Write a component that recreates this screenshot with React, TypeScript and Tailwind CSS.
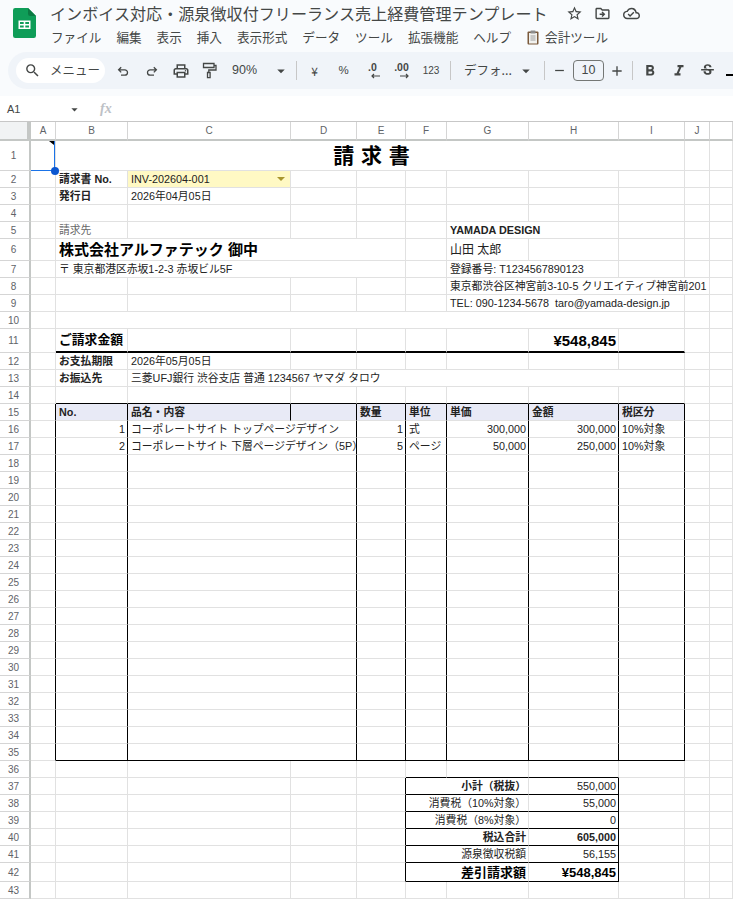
import type { ReactNode } from "react";
import {
    MdArrowDropDown,
    MdFormatBold,
    MdFormatItalic,
    MdOutlineCloudDone,
    MdOutlineDriveFileMove,
    MdOutlineLocalPrintshop,
    MdAdd,
    MdRemove,
    MdSearch,
    MdStarBorder,
    MdStrikethroughS,
} from "react-icons/md";

const GRID_COLS = "grid grid-cols-[31px_25px_72px_163px_66px_49px_41px_82px_90px_66px_25px_23px]";
const SHEET_FONT = "font-['Liberation_Sans','Noto_Sans_CJK_JP',sans-serif]";
const UI_FONT = "font-['Noto_Sans_CJK_JP','Liberation_Sans',sans-serif]";

const SPAN: Record<number, string> = {
    1: "col-span-1",
    2: "col-span-2",
    3: "col-span-3",
    4: "col-span-4",
    7: "col-span-7",
    8: "col-span-8",
};

const COL_LABELS = ["A", "B", "C", "D", "E", "F", "G", "H", "I", "J", ""];

// 行の高さ（1始まり）
function rowHeight(row: number) {
    if (row === 1) return "h-[30px]";
    if (row === 6) return "h-[22px]";
    if (row === 11) return "h-[24px]";
    if (row === 42) return "h-[19px]";
    return "h-[17px]";
}

interface CellDef {
    col: number; // 0 = A
    span?: number;
    text?: ReactNode;
    cls?: string;
}

const B = "font-bold";
const R = "justify-end pr-[2px]";
const HEAD = "bg-[#e8eaf6]";

const CELLS: Record<number, CellDef[]> = {
    1: [{ col: 1, span: 8, text: "請 求 書", cls: "justify-center text-[21px] font-bold text-black [word-spacing:1px]" }],
    2: [
        { col: 1, text: "請求書 No.", cls: B },
        {
            col: 2,
            text: (
                <>
                    <span>INV-202604-001</span>
                    <span className="ml-auto mr-[5px] h-0 w-0 border-x-[4px] border-t-[4px] border-x-transparent border-t-[#a8962e]" />
                </>
            ),
            cls: "bg-[#fff9c4]",
        },
    ],
    3: [
        { col: 1, text: "発行日", cls: B },
        { col: 2, text: "2026年04月05日" },
    ],
    5: [
        { col: 1, text: "請求先", cls: "text-[#666666]" },
        { col: 6, span: 2, text: "YAMADA DESIGN", cls: B },
    ],
    6: [
        { col: 1, span: 4, text: "株式会社アルファテック 御中", cls: "text-[15px] font-bold text-black" },
        { col: 6, text: "山田 太郎", cls: "text-[12px]" },
    ],
    7: [
        { col: 1, span: 4, text: "〒 東京都港区赤坂1-2-3 赤坂ビル5F" },
        { col: 6, span: 2, text: "登録番号: T1234567890123" },
    ],
    8: [{ col: 6, span: 4, text: "東京都渋谷区神宮前3-10-5 クリエイティブ神宮前201" }],
    9: [{ col: 6, span: 3, text: "TEL: 090-1234-5678  taro@yamada-design.jp" }],
    10: [{ col: 1, span: 8 }],
    11: [
        { col: 1, text: "ご請求金額", cls: "text-[12.800px] font-bold text-black" },
        { col: 7, text: "¥548,845", cls: `${R} text-[15px] font-bold text-black` },
    ],
    12: [
        { col: 1, text: "お支払期限", cls: B },
        { col: 2, text: "2026年05月05日" },
    ],
    13: [
        { col: 1, text: "お振込先", cls: B },
        { col: 2, span: 7, text: "三菱UFJ銀行 渋谷支店 普通 1234567 ヤマダ タロウ" },
    ],
    15: [
        { col: 1, text: "No.", cls: `${B} ${HEAD}` },
        { col: 2, text: "品名・内容", cls: `${B} ${HEAD}` },
        { col: 3, cls: HEAD },
        { col: 4, text: "数量", cls: `${B} ${HEAD}` },
        { col: 5, text: "単位", cls: `${B} ${HEAD}` },
        { col: 6, text: "単価", cls: `${B} ${HEAD}` },
        { col: 7, text: "金額", cls: `${B} ${HEAD}` },
        { col: 8, text: "税区分", cls: `${B} ${HEAD}` },
    ],
    16: [
        { col: 1, text: "1", cls: R },
        { col: 2, span: 2, text: "コーポレートサイト トップページデザイン" },
        { col: 4, text: "1", cls: R },
        { col: 5, text: "式" },
        { col: 6, text: "300,000", cls: R },
        { col: 7, text: "300,000", cls: R },
        { col: 8, text: "10%対象" },
    ],
    17: [
        { col: 1, text: "2", cls: R },
        { col: 2, span: 2, text: "コーポレートサイト 下層ページデザイン（5P）" },
        { col: 4, text: "5", cls: R },
        { col: 5, text: "ページ" },
        { col: 6, text: "50,000", cls: R },
        { col: 7, text: "250,000", cls: R },
        { col: 8, text: "10%対象" },
    ],
    37: [
        { col: 5, span: 2, text: "小計（税抜）", cls: `${R} ${B}` },
        { col: 7, text: "550,000", cls: R },
    ],
    38: [
        { col: 5, span: 2, text: "消費税（10%対象）", cls: R },
        { col: 7, text: "55,000", cls: R },
    ],
    39: [
        { col: 5, span: 2, text: "消費税（8%対象）", cls: R },
        { col: 7, text: "0", cls: R },
    ],
    40: [
        { col: 5, span: 2, text: "税込合計", cls: `${R} ${B}` },
        { col: 7, text: "605,000", cls: `${R} ${B}` },
    ],
    41: [
        { col: 5, span: 2, text: "源泉徴収税額", cls: R },
        { col: 7, text: "56,155", cls: R },
    ],
    42: [
        { col: 5, span: 2, text: "差引請求額", cls: `${R} text-[13px] font-bold text-black` },
        { col: 7, text: "¥548,845", cls: `${R} text-[13px] font-bold text-black` },
    ],
};

// 18〜35行目は明細の空行（C:D 結合）
for (let r = 18; r <= 35; r++) {
    CELLS[r] = [{ col: 2, span: 2 }];
}

function rightBorder(row: number, lastCol: number) {
    if (row >= 15 && row <= 35 && [0, 1, 3, 4, 5, 6, 7, 8].includes(lastCol)) return "border-r-black";
    if (row === 15 && lastCol === 2) return "border-r-black";
    if (row >= 37 && row <= 42 && (lastCol === 4 || lastCol === 7)) return "border-r-black";
    return "border-r-[#e1e1e1]";
}

function bottomBorder(row: number, col: number, lastCol: number) {
    if (row === 11 && col >= 1 && lastCol <= 8) return "border-b-2 border-b-black";
    if ((row === 14 || row === 35) && col >= 1 && lastCol <= 8) return "border-b-black";
    if (row >= 36 && row <= 42 && col >= 5 && lastCol <= 7) return "border-b-black";
    return "border-b-[#e1e1e1]";
}

function Row({ row }: { row: number }) {
    const defs = CELLS[row] ?? [];
    const cells: ReactNode[] = [];
    let c = 0;
    while (c < 11) {
        const def = defs.find((d) => d.col === c);
        const span = def?.span ?? 1;
        const last = c + span - 1;
        cells.push(
            <div
                key={c}
                className={`${SPAN[span]} flex items-center whitespace-pre border-b border-r pl-[3px] leading-none ${rightBorder(row, last)} ${bottomBorder(row, c, last)} ${def?.cls ?? ""}`}
            >
                {def?.text}
            </div>
        );
        c += span;
    }
    return (
        <div className={`${GRID_COLS} ${rowHeight(row)} text-[10.800px] text-[#222222]`}>
            <div className="flex items-center justify-center border-b border-r-2 border-b-[#d5d5d5] border-r-[#c4c7c5] pr-[2px] text-[10px] text-[#5f6368]">
                {row}
            </div>
            {cells}
        </div>
    );
}

function ToolIcon({ children, w = "w-[29px]" }: { children: ReactNode; w?: string }) {
    return <div className={`flex h-full shrink-0 items-center justify-center text-[#444746] ${w}`}>{children}</div>;
}

function Sep({ cls }: { cls: string }) {
    return <div className={`h-[19px] w-px shrink-0 bg-[#c7c7c7] ${cls}`} />;
}

function SheetsLogo() {
    return (
        <svg width="23" height="30" viewBox="0 0 23 30">
            <path d="M2.2 0H15l8 8v19.8a2.2 2.2 0 0 1-2.2 2.2H2.2A2.2 2.2 0 0 1 0 27.800V2.200A2.200 2.200 0 0 1 2.200 0z" fill="#0f9d58" />
            <path d="M15 0l8 8h-5.800A2.200 2.200 0 0 1 15 5.800z" fill="#0b7a43" />
            <path d="M5.500 12.500h12v8.500h-12zM7 14v2h3.700v-2zm5.300 0v2H16v-2zM7 17.500v2h3.700v-2zm5.300 0v2H16v-2z" fill="#ffffff" fillRule="evenodd" />
        </svg>
    );
}

function ClipboardIcon() {
    return (
        <svg width="12" height="15" viewBox="0 0 12 15">
            <rect x="0.500" y="1.500" width="11" height="13" rx="1" fill="#7b5a3c" />
            <rect x="2" y="3" width="8" height="10.500" fill="#f1f1ee" />
            <rect x="3.500" y="0.500" width="5" height="3" rx="0.500" fill="#8d8d8d" />
            <path d="M3.500 6h5M3.500 8h5M3.500 10h5" stroke="#8a8a8a" strokeWidth="0.800" />
        </svg>
    );
}

// 細い線の Sheets 風アイコン
function UndoIcon({ flip }: { flip?: boolean }) {
    return (
        <svg width="14" height="14" viewBox="0 0 14 14" className={flip ? "-scale-x-100" : ""}>
            <path d="M5.200 3.200L2.600 5.800l2.600 2.600M2.800 5.800h6a2.700 2.700 0 0 1 0 5.400H5" fill="none" stroke="#444746" strokeWidth="1.300" />
        </svg>
    );
}

function PaintIcon() {
    return (
        <svg width="15" height="17" viewBox="0 0 15 17">
            <path d="M1.500 1.500h10.500v4H1.500zM12 3.500h2v4.500H6.800v2.500M5.500 10.500h2.600v5.200H5.500z" fill="none" stroke="#444746" strokeWidth="1.300" />
        </svg>
    );
}

function DecimalIcon({ label, dir }: { label: string; dir: "left" | "right" }) {
    return (
        <div className="relative flex h-[20px] w-[22px] flex-col items-center">
            <span className={`${SHEET_FONT} text-[10.500px] font-bold leading-[12px]`}>{label}</span>
            <svg width="11" height="6" viewBox="0 0 11 6" className={dir === "right" ? "ml-[5px]" : "ml-[6px]"}>
                {dir === "left" ? (
                    <path d="M10 3H2M4 1L2 3l2 2" fill="none" stroke="#444746" strokeWidth="1.200" />
                ) : (
                    <path d="M1 3h8M7 1l2 2-2 2" fill="none" stroke="#444746" strokeWidth="1.200" />
                )}
            </svg>
        </div>
    );
}

const MENU = ["ファイル", "編集", "表示", "挿入", "表示形式", "データ", "ツール", "拡張機能", "ヘルプ"];

export default function App() {
    const rows = Array.from({ length: 43 }, (_, i) => i + 1);
    return (
        <div className={`relative h-[899px] w-[733px] overflow-hidden bg-white ${UI_FONT}`}>
            {/* タイトルとメニュー */}
            <div className="h-[96px] bg-[#f9fbfd]">
                <div className="flex h-[52px]">
                    <div className="ml-[13px] mt-[8px] shrink-0">
                        <SheetsLogo />
                    </div>
                    <div className="ml-[14px] flex flex-col">
                        <div className="flex h-[27px] items-center">
                            <span className="text-[16.100px] leading-none text-[#444746]">
                                インボイス対応・源泉徴収付フリーランス売上経費管理テンプレート
                            </span>
                            <MdStarBorder className="ml-[18px] text-[#444746]" size={17} />
                            <MdOutlineDriveFileMove className="ml-[11px] text-[#444746]" size={17} />
                            <MdOutlineCloudDone className="ml-[12px] text-[#444746]" size={17} />
                        </div>
                        <div className="ml-[1px] mt-[2px] flex h-[17px] items-center gap-[15px] text-[12.600px] leading-none text-[#444746]">
                            {MENU.map((m) => (
                                <span key={m}>{m}</span>
                            ))}
                            <span className="ml-[1px] flex items-center gap-[6px]">
                                <ClipboardIcon />
                                会計ツール
                            </span>
                        </div>
                    </div>
                </div>
                {/* ツールバー */}
                <div className="ml-[8px] flex h-[37px] w-[740px] items-center rounded-l-[19px] bg-[#f0f4f9] pl-[8px] text-[#444746]">
                    <div className="flex h-[25px] w-[89px] shrink-0 items-center rounded-full bg-white pl-[8px]">
                        <MdSearch size={17} />
                        <span className="ml-[9px] text-[12.500px] leading-none">メニュー</span>
                    </div>
                    <div className="ml-[3px] flex h-full items-center">
                        <ToolIcon><UndoIcon /></ToolIcon>
                        <ToolIcon><UndoIcon flip /></ToolIcon>
                        <ToolIcon><MdOutlineLocalPrintshop size={18} /></ToolIcon>
                        <ToolIcon><PaintIcon /></ToolIcon>
                    </div>
                    <span className={`${SHEET_FONT} ml-[8px] w-[40px] shrink-0 text-[12.500px] leading-none`}>90%</span>
                    <MdArrowDropDown className="shrink-0" size={18} />
                    <Sep cls="ml-[6px] mr-[3px]" />
                    <ToolIcon><span className="text-[12px] leading-none">¥</span></ToolIcon>
                    <ToolIcon><span className={`${SHEET_FONT} text-[11.500px] leading-none`}>%</span></ToolIcon>
                    <ToolIcon><DecimalIcon label=".0" dir="left" /></ToolIcon>
                    <ToolIcon><DecimalIcon label=".00" dir="right" /></ToolIcon>
                    <ToolIcon w="w-[30px]"><span className={`${SHEET_FONT} text-[10px] leading-none`}>123</span></ToolIcon>
                    <Sep cls="ml-[4px] mr-[13px]" />
                    <span className="w-[53px] shrink-0 text-[12.500px] leading-none">デフォ...</span>
                    <MdArrowDropDown className="shrink-0" size={18} />
                    <Sep cls="ml-[9px]" />
                    <ToolIcon w="w-[28px]"><MdRemove size={15} /></ToolIcon>
                    <div className={`${SHEET_FONT} flex h-[21px] w-[31px] shrink-0 items-center justify-center rounded-[4px] border border-[#747775] text-[12.500px] leading-none`}>
                        10
                    </div>
                    <ToolIcon w="w-[26px]"><MdAdd size={16} /></ToolIcon>
                    <Sep cls="ml-[2px] mr-[2px]" />
                    <ToolIcon><MdFormatBold size={18} /></ToolIcon>
                    <ToolIcon><MdFormatItalic size={18} /></ToolIcon>
                    <ToolIcon><MdStrikethroughS size={17} /></ToolIcon>
                    <div className="ml-[4px] mt-[9px] h-[2px] w-[10px] shrink-0 bg-black" />
                </div>
            </div>

            {/* 数式バー */}
            <div className={`${SHEET_FONT} flex h-[26px] items-center border-b border-[#c7c7c7] bg-white pt-[1px]`}>
                <span className="ml-[7px] w-[60px] text-[11px] leading-none text-[#444746]">A1</span>
                <MdArrowDropDown className="text-[#444746]" size={15} />
                <span className="ml-[18px] font-['Liberation_Serif',serif] text-[14px] font-bold italic leading-none text-[#bdc1c6]">
                    fx
                </span>
            </div>

            {/* シート */}
            <div className={SHEET_FONT}>
                <div className={`${GRID_COLS} h-[19px] text-[10px] text-[#5f6368]`}>
                    <div className="border-b-2 border-r-[4px] border-b-[#c4c7c5] border-r-[#c4c7c5] bg-[#f1f3f4]" />
                    {COL_LABELS.map((label, i) => (
                        <div
                            key={i}
                            className="flex items-center justify-center border-b-2 border-r border-b-[#c4c7c5] border-r-[#d5d5d5] leading-none"
                        >
                            {label}
                        </div>
                    ))}
                </div>
                {rows.map((r) => (
                    <Row key={r} row={r} />
                ))}
            </div>

            {/* A1 の選択枠とメモのマーク */}
            <div className="pointer-events-none absolute left-[31px] top-[141px] h-[30px] w-[24px] border-b border-r border-[#1a73e8]">
                <div className="absolute right-0 top-0 h-0 w-0 border-l-[5px] border-t-[4px] border-l-transparent border-t-black" />
                <div className="absolute -bottom-[5px] -right-[5px] h-[8px] w-[8px] rounded-full bg-[#0b57d0]" />
            </div>
        </div>
    );
}
